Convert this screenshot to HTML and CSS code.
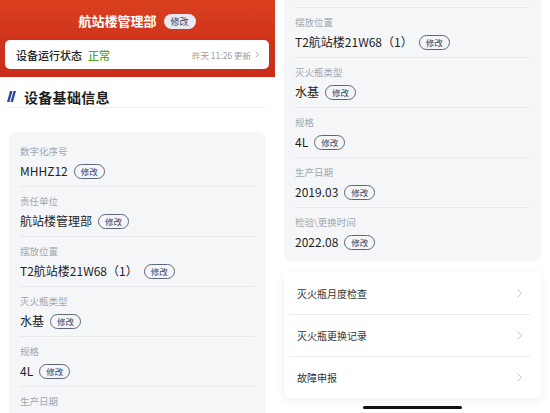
FILE: index.html
```html
<!DOCTYPE html>
<html lang="zh-CN">
<head>
<meta charset="utf-8">
<title>设备基础信息</title>
<link rel="stylesheet" href="styles.css">
</head>
<body>
<div class="device">
  <div class="screen">
    <div class="page">
      <header class="hero">
        <div class="hero-title">
          <span class="hero-name">航站楼管理部</span>
          <span class="hero-edit">修改</span>
        </div>
        <div class="status-card">
          <span class="status-label">设备运行状态</span>
          <span class="status-value">正常</span>
          <span class="status-time">昨天 11:26 更新</span>
          <svg class="status-arrow" width="4" height="7" viewBox="0 0 4 7"><path d="M0.5 0.5 L3.5 3.5 L0.5 6.5" fill="none" stroke="#a0a0a0" stroke-width="0.9"/></svg>
        </div>
      </header>
      <div class="section-head">
        <svg class="section-icon" width="9" height="11" viewBox="0 0 9 11"><polygon points="3,0 5.5,0 2.5,11 0,11" fill="#2f4d9f"/><polygon points="6.5,0 9,0 6,11 3.5,11" fill="#2f4d9f"/></svg>
        <span class="section-title">设备基础信息</span>
      </div>
      <div class="info-card">
        <div class="info-row"><div class="info-label">数字化序号</div><div class="info-value"><span>MHHZ12</span><span class="pill">修改</span></div></div>
        <div class="info-row"><div class="info-label">责任单位</div><div class="info-value"><span>航站楼管理部</span><span class="pill">修改</span></div></div>
        <div class="info-row"><div class="info-label">摆放位置</div><div class="info-value"><span>T2航站楼21W68（1）</span><span class="pill">修改</span></div></div>
        <div class="info-row"><div class="info-label">灭火瓶类型</div><div class="info-value"><span>水基</span><span class="pill">修改</span></div></div>
        <div class="info-row"><div class="info-label">规格</div><div class="info-value"><span>4L</span><span class="pill">修改</span></div></div>
        <div class="info-row"><div class="info-label">生产日期</div><div class="info-value"><span>2019.03</span><span class="pill">修改</span></div></div>
        <div class="info-row"><div class="info-label">检验\更换时间</div><div class="info-value"><span>2022.08</span><span class="pill">修改</span></div></div>
      </div>
      <div class="menu-card">
        <div class="menu-row"><span>灭火瓶月度检查</span><svg width="5" height="9" viewBox="0 0 5 9"><path d="M0.5 0.5 L4.5 4.5 L0.5 8.5" fill="none" stroke="#bdbdbd" stroke-width="0.9"/></svg></div>
        <div class="menu-row"><span>灭火瓶更换记录</span><svg width="5" height="9" viewBox="0 0 5 9"><path d="M0.5 0.5 L4.5 4.5 L0.5 8.5" fill="none" stroke="#bdbdbd" stroke-width="0.9"/></svg></div>
        <div class="menu-row"><span>故障申报</span><svg width="5" height="9" viewBox="0 0 5 9"><path d="M0.5 0.5 L4.5 4.5 L0.5 8.5" fill="none" stroke="#bdbdbd" stroke-width="0.9"/></svg></div>
      </div>
    </div>
  </div>
  <div class="screen screen-scrolled">
    <div class="page">
      <header class="hero">
        <div class="hero-title">
          <span class="hero-name">航站楼管理部</span>
          <span class="hero-edit">修改</span>
        </div>
        <div class="status-card">
          <span class="status-label">设备运行状态</span>
          <span class="status-value">正常</span>
          <span class="status-time">昨天 11:26 更新</span>
          <svg class="status-arrow" width="4" height="7" viewBox="0 0 4 7"><path d="M0.5 0.5 L3.5 3.5 L0.5 6.5" fill="none" stroke="#a0a0a0" stroke-width="0.9"/></svg>
        </div>
      </header>
      <div class="section-head">
        <svg class="section-icon" width="9" height="11" viewBox="0 0 9 11"><polygon points="3,0 5.5,0 2.5,11 0,11" fill="#2f4d9f"/><polygon points="6.5,0 9,0 6,11 3.5,11" fill="#2f4d9f"/></svg>
        <span class="section-title">设备基础信息</span>
      </div>
      <div class="info-card">
        <div class="info-row"><div class="info-label">数字化序号</div><div class="info-value"><span>MHHZ12</span><span class="pill">修改</span></div></div>
        <div class="info-row"><div class="info-label">责任单位</div><div class="info-value"><span>航站楼管理部</span><span class="pill">修改</span></div></div>
        <div class="info-row"><div class="info-label">摆放位置</div><div class="info-value"><span>T2航站楼21W68（1）</span><span class="pill">修改</span></div></div>
        <div class="info-row"><div class="info-label">灭火瓶类型</div><div class="info-value"><span>水基</span><span class="pill">修改</span></div></div>
        <div class="info-row"><div class="info-label">规格</div><div class="info-value"><span>4L</span><span class="pill">修改</span></div></div>
        <div class="info-row"><div class="info-label">生产日期</div><div class="info-value"><span>2019.03</span><span class="pill">修改</span></div></div>
        <div class="info-row"><div class="info-label">检验\更换时间</div><div class="info-value"><span>2022.08</span><span class="pill">修改</span></div></div>
      </div>
      <div class="menu-card">
        <div class="menu-row"><span>灭火瓶月度检查</span><svg width="5" height="9" viewBox="0 0 5 9"><path d="M0.5 0.5 L4.5 4.5 L0.5 8.5" fill="none" stroke="#bdbdbd" stroke-width="0.9"/></svg></div>
        <div class="menu-row"><span>灭火瓶更换记录</span><svg width="5" height="9" viewBox="0 0 5 9"><path d="M0.5 0.5 L4.5 4.5 L0.5 8.5" fill="none" stroke="#bdbdbd" stroke-width="0.9"/></svg></div>
        <div class="menu-row"><span>故障申报</span><svg width="5" height="9" viewBox="0 0 5 9"><path d="M0.5 0.5 L4.5 4.5 L0.5 8.5" fill="none" stroke="#bdbdbd" stroke-width="0.9"/></svg></div>
      </div>
    </div>
    <div class="home-bar"></div>
  </div>
</div>
</body>
</html>
```
FILE: styles.css
```css
* { box-sizing: border-box; }
html, body { margin: 0; padding: 0; background: #ffffff; }
body {
  font-family: "Noto Sans CJK SC", "Noto Sans", sans-serif;
  color: #1f1f1f;
}
.device { display: flex; width: 550px; height: 413px; }
.screen {
  position: relative;
  width: 275px;
  height: 413px;
  overflow: hidden;
  background: #ffffff;
}
.page { width: 275px; }
.screen-scrolled .page { margin-top: -229px; }

.hero {
  height: 77px;
  padding: 11px 6px 0 5px;
  background: linear-gradient(180deg, #d9401f 0%, #cf321b 60%, #c92c19 100%);
}
.hero-title {
  display: flex;
  align-items: center;
  justify-content: center;
  gap: 7px;
  height: 20px;
}
.hero-name {
  color: #ffffff;
  font-size: 13px;
  font-weight: 700;
  line-height: 20px;
}
.hero-edit {
  height: 15px;
  padding: 0 7px;
  border-radius: 8px;
  background: #e8e9f1;
  color: #3b4766;
  font-size: 9px;
  line-height: 15px;
}
.status-card {
  display: flex;
  align-items: center;
  height: 29px;
  margin-top: 9px;
  padding: 0 10px 0 11px;
  border-radius: 5px;
  background: #ffffff;
}
.status-label { font-size: 11px; font-weight: 500; color: #222; }
.status-value { margin-left: 6px; font-size: 11px; font-weight: 500; color: #55a530; }
.status-time { margin-left: auto; font-size: 8.5px; color: #9a9a9a; }
.status-arrow { margin-left: 4px; }

.section-head {
  display: flex;
  align-items: center;
  gap: 8px;
  height: 31px;
  margin: 0 9px 0 7px;
  padding-top: 9px;
  border-bottom: 1px solid #f0f0f2;
}
.section-icon { flex: none; }
.section-title {
  font-size: 14px;
  font-weight: 700;
  line-height: 20px;
  color: #1e1e1e;
  letter-spacing: 0.3px;
}

.info-card {
  margin: 24px 9px 0 9px;
  padding: 5px 11px 4px;
  border-radius: 8px;
  background: #f5f6f8;
}
.info-row { padding: 7px 0 6px; }
.info-row + .info-row { border-top: 1px solid #e6e8ec; }
.info-label {
  font-size: 9.5px;
  line-height: 14px;
  color: #a2a6af;
}
.info-value {
  display: flex;
  align-items: center;
  gap: 6px;
  margin-top: 4px;
  height: 18px;
  font-size: 12px;
  line-height: 18px;
  color: #1f1f1f;
}
.pill {
  height: 15px;
  padding: 0 6px;
  border: 1px solid #5e6679;
  border-radius: 8px;
  font-size: 8.5px;
  line-height: 13px;
  color: #3a4560;
}

.menu-card {
  margin: 11px 9px 0 9px;
  border-radius: 4px;
  background: #ffffff;
  box-shadow: 0 2px 10px rgba(0, 0, 0, 0.07);
}
.menu-row {
  display: flex;
  align-items: center;
  justify-content: space-between;
  height: 42px;
  margin: 0 11px 0 5px;
  padding: 0 8px 0 8px;
  font-size: 10px;
  color: #333333;
}
.menu-row + .menu-row { border-top: 1px solid #ececec; }

.home-bar {
  position: absolute;
  left: 88px;
  bottom: 4px;
  width: 99px;
  height: 3px;
  border-radius: 2px;
  background: #111111;
}
```
